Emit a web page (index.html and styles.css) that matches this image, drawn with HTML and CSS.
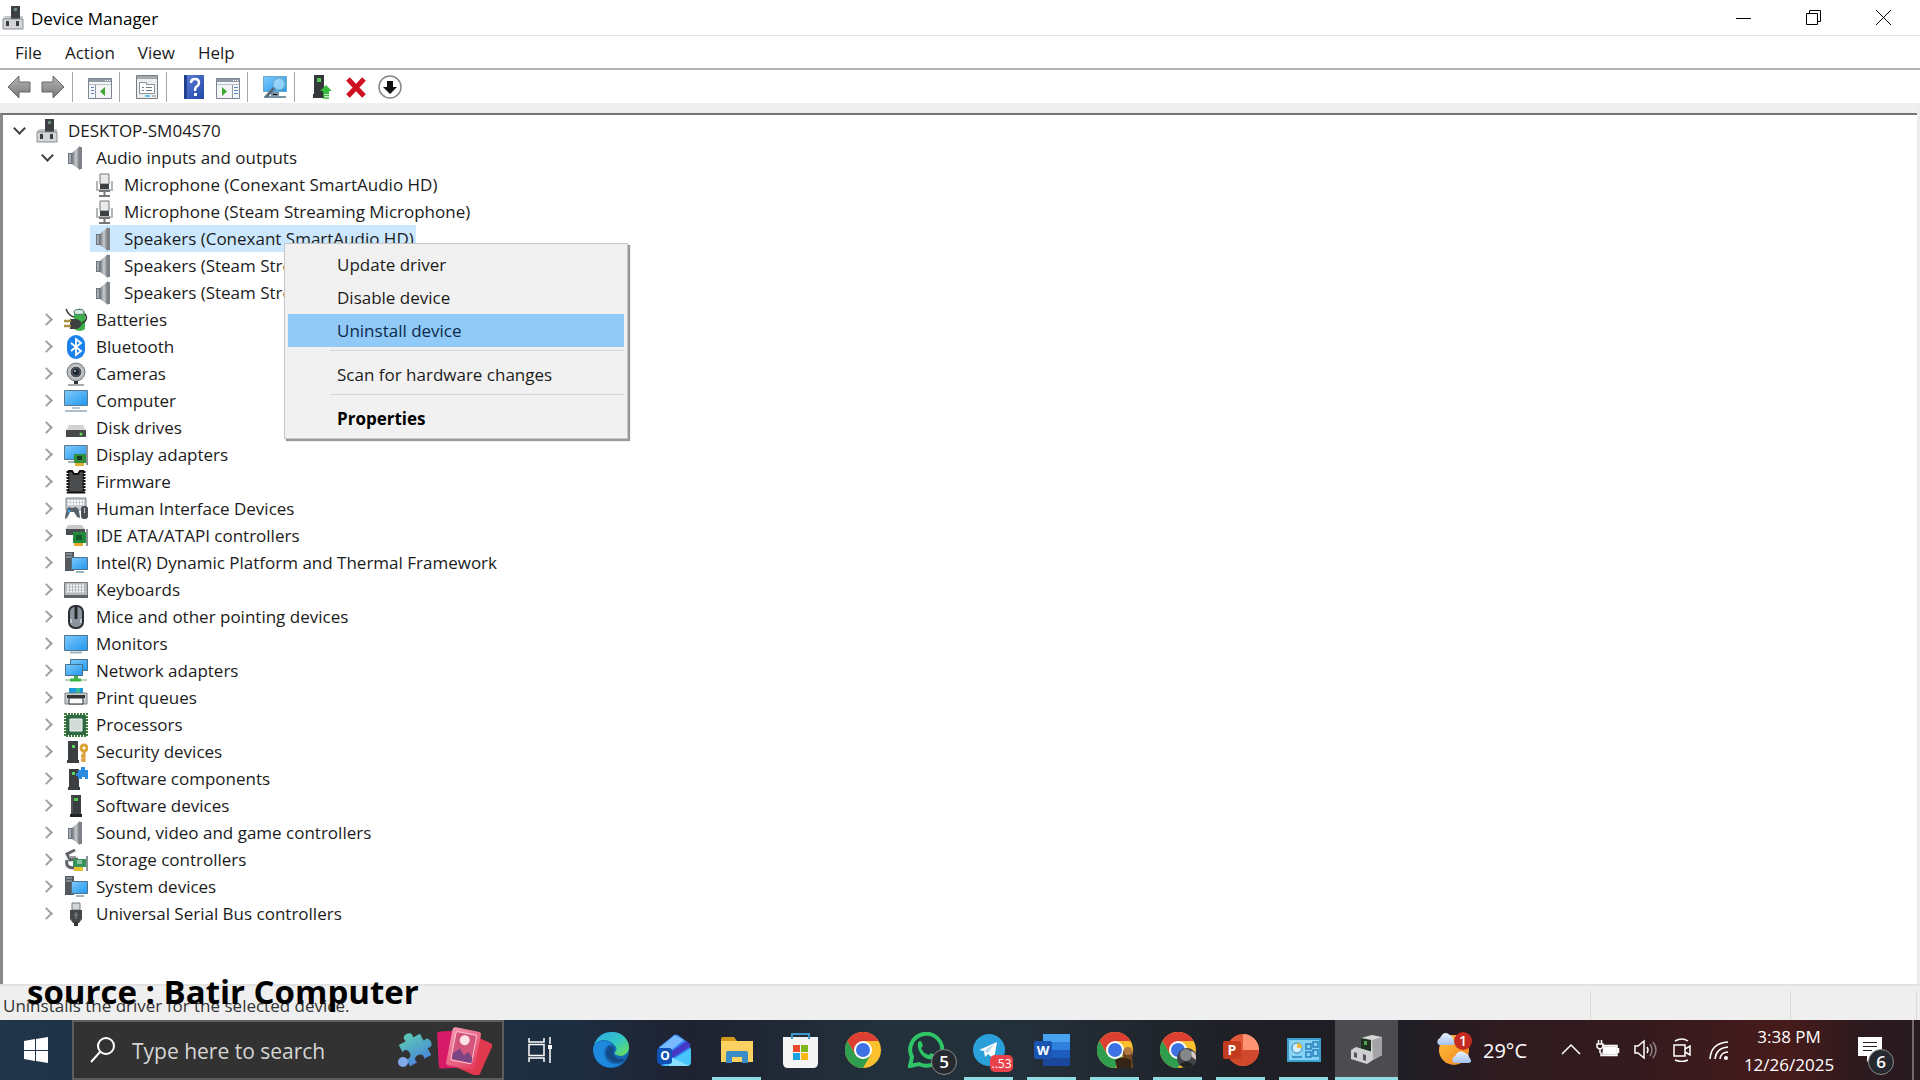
FILE: index.html
```html
<!DOCTYPE html>
<html lang="en">
<head>
<meta charset="utf-8">
<title>Device Manager</title>
<link rel="stylesheet" href="styles.css">
</head>
<body>
<svg class="defs" width="0" height="0" aria-hidden="true">
  <defs>
    <linearGradient id="screen" x1="0" y1="0" x2="1" y2="1"><stop offset="0" stop-color="#7fcbfb"/><stop offset="1" stop-color="#2196ee"/></linearGradient>
    <linearGradient id="metal" x1="0" y1="0" x2="1" y2="0"><stop offset="0" stop-color="#70757a"/><stop offset=".5" stop-color="#c8ccd0"/><stop offset="1" stop-color="#6a6e73"/></linearGradient>
    <linearGradient id="arrow" x1="0" y1="0" x2="0" y2="1"><stop offset="0" stop-color="#b5b5b5"/><stop offset="1" stop-color="#787878"/></linearGradient>
    <linearGradient id="help" x1="0" y1="0" x2="1" y2="1"><stop offset="0" stop-color="#5b7fd6"/><stop offset="1" stop-color="#2347a8"/></linearGradient>
    <linearGradient id="teal" x1="0" y1="0" x2="1" y2="1"><stop offset="0" stop-color="#2aa7e8"/><stop offset=".55" stop-color="#35c9c0"/><stop offset="1" stop-color="#6fe04a"/></linearGradient>
    <linearGradient id="puzzle" x1="0" y1="0" x2="0" y2="1"><stop offset="0" stop-color="#5cc9b4"/><stop offset="1" stop-color="#4a8ad8"/></linearGradient>
    <linearGradient id="photo" x1="0" y1="0" x2="1" y2="1"><stop offset="0" stop-color="#f49ab4"/><stop offset="1" stop-color="#e23a5e"/></linearGradient>
    <linearGradient id="cloud" x1="0" y1="0" x2="0" y2="1"><stop offset="0" stop-color="#e9f2ff"/><stop offset="1" stop-color="#a5c1ee"/></linearGradient>
    <linearGradient id="sun" x1="0" y1="0" x2="1" y2="1"><stop offset="0" stop-color="#ffc23c"/><stop offset="1" stop-color="#f5821f"/></linearGradient>
  </defs>
  <symbol id="i-devmgr" viewBox="0 0 24 24"><rect x="9" y="0" width="9" height="13" fill="#3d4145"/><rect x="12" y="2" width="3" height="3" fill="#6f8f78"/><path d="M3 10h6v3h9v-3h3v13H1V12z" fill="#c3c6ca"/><path d="M1 13h20v10H1z" fill="#d3d5d8" stroke="#8b8f94"/><rect x="4" y="15" width="3" height="5" fill="#3a3d42"/><rect x="14" y="15" width="3" height="5" fill="#3a3d42"/></symbol>
  <symbol id="i-speaker" viewBox="0 0 24 24"><path d="M4 7h5v11H4z" fill="#6f757c"/><path d="M5 8h2v9H5z" fill="#a5abb2"/><path d="M8 7 16 0v24l-8-6z" fill="url(#metal)"/><path d="M15 1h3v22h-3z" fill="#7d8288"/></symbol>
  <symbol id="i-mic" viewBox="0 0 24 24"><path d="M8 1h9v10H8z" fill="#e9eaeb" stroke="#777"/><path d="M8 11h9v5H8z" fill="#3e4144"/><path d="M5 8v9h15V8" fill="none" stroke="#b4b6b8" stroke-width="2"/><path d="M7 18h11M12.500 18v4M7 23h11" fill="none" stroke="#777" stroke-width="2"/></symbol>
  <symbol id="i-battery" viewBox="0 0 24 24"><path d="M10 3q6-5 10 0l1 3v15q-5 4-11 0z" fill="#3cae49"/><ellipse cx="15" cy="4" rx="5" ry="2.500" fill="#d9eeda" stroke="#577"/><path d="M2 1q3 7 8 8M21 6q4 6-3 9" fill="none" stroke="#333" stroke-width="1.500"/><path d="M6 11h5q5 0 7 5-2 5-7 5H6z" fill="#3c403e"/><path d="M0 13h7M0 18h7" stroke="#a89044" stroke-width="2.500"/></symbol>
  <symbol id="i-bluetooth" viewBox="0 0 24 24"><rect x="3" y="0" width="18" height="24" rx="9" fill="#1a82ea"/><path d="m7 8 10 8-5 4V4l5 4-10 8" fill="none" stroke="#fff" stroke-width="1.800"/></symbol>
  <symbol id="i-camera" viewBox="0 0 24 24"><circle cx="12" cy="10" r="9" fill="#b6b9bb" stroke="#74777a"/><circle cx="12" cy="10" r="6" fill="#4a4f55" stroke="#e6e6e6"/><circle cx="12" cy="10" r="3" fill="#1d2730"/><circle cx="11" cy="9" r="1" fill="#9cc0dd"/><path d="M10 19h4v3h-4z" fill="#333"/><path d="M4 23h16" stroke="#a9abad" stroke-width="2"/></symbol>
  <symbol id="i-computer" viewBox="0 0 24 24"><path d="M.5 1.500h23v15H.5z" fill="url(#screen)" stroke="#58788d"/><path d="M8 18h8v2H8z" fill="#b6c6d2"/><path d="M1 21h22v2H1z" fill="#aebdc9"/></symbol>
  <symbol id="i-disk" viewBox="0 0 24 24"><path d="M5 9h14l3 6H2z" fill="#d0d2d4"/><path d="M2 14h20v7H2z" fill="#47494b"/><circle cx="17" cy="18" r="1.500" fill="#62e04c"/></symbol>
  <symbol id="i-display" viewBox="0 0 24 24"><path d="M.5 2.500h22v14H.5z" fill="url(#screen)" stroke="#58788d"/><path d="M4 19h7" stroke="#9eb2c0" stroke-width="2"/><path d="M10 11h12v9H10z" fill="#2f8f3f"/><path d="M13 13h5v4h-5z" fill="#1b3f22"/><path d="M11 20h9v3h-9z" fill="#e0b030"/><path d="M23 2v20" stroke="#8b9297" stroke-width="2"/></symbol>
  <symbol id="i-firmware" viewBox="0 0 24 24"><path d="M4 1h4l2 3h4l2-3h4v22H4z" fill="#4a4c4e"/><path d="M4 1h4l2 3h4l2-3h4" fill="none" stroke="#111" stroke-width="2"/><path d="M4 1v22M20 1v22" stroke="#111" stroke-width="3" stroke-dasharray="2 1"/><path d="M3 22.500h18" stroke="#111" stroke-width="2"/></symbol>
  <symbol id="i-hid" viewBox="0 0 24 24"><path d="M2 1h20v12H2z" fill="#c8cccf" stroke="#82888d"/><path d="M4 4h16M4 7h16" stroke="#fff" stroke-width="2" stroke-dasharray="2 1"/><path d="M1 22q1-13 5-12 1 2 5 0 4-1 5 11l-3-1-3-5H6l-3 6z" fill="#56626c"/><circle cx="5" cy="14" r="1.500" fill="#3ba3ea"/><rect x="17" y="9" width="7" height="13" rx="3" fill="#4b5056"/><path d="M20.500 11v5" stroke="#bcc5cc"/></symbol>
  <symbol id="i-ide" viewBox="0 0 24 24"><path d="M4 1h14l3 5H1z" fill="#c7c9cb"/><path d="M2 5h19v6H2z" fill="#4a4d50"/><path d="M9 8h13v11H9z" fill="#218a3c"/><path d="M12 11h6v5h-6z" fill="#15552a"/><path d="M10 19h9v3h-9z" fill="#e9a928"/><path d="M23 5v17" stroke="#8b9297" stroke-width="2"/></symbol>
  <symbol id="i-system" viewBox="0 0 24 24"><path d="M1 1h9v19H1z" fill="#55595d"/><path d="M2 3h6M2 6h6" stroke="#b4bfc4"/><path d="M7.500 6.500h16v12h-16z" fill="url(#screen)" stroke="#4f7288"/><path d="M12 21h8" stroke="#9ab4c4" stroke-width="2"/></symbol>
  <symbol id="i-keyboard" viewBox="0 0 24 24"><path d="M.5 4.500h23v15H.5z" fill="#b5b9bc" stroke="#777b7e"/><path d="M3 7.500h18M3 10.500h18M3 13.500h18" stroke="#fafafa" stroke-width="2" stroke-dasharray="2 1"/><path d="M0 17h24v3H0z" fill="#606366"/></symbol>
  <symbol id="i-mouse" viewBox="0 0 24 24"><rect x="5" y="1" width="14" height="22" rx="6" fill="#8d939c" stroke="#2c2f33" stroke-width="2"/><path d="M12 2v12" stroke="#24272a" stroke-width="3"/><path d="M7 14v4M17 14v4" stroke="#c0c6cf" stroke-width="2"/></symbol>
  <symbol id="i-monitor" viewBox="0 0 24 24"><path d="M.5 3.500h23v15H.5z" fill="url(#screen)" stroke="#51748a"/><path d="M6 20.500h12" stroke="#9fb5c4" stroke-width="2"/></symbol>
  <symbol id="i-network" viewBox="0 0 24 24"><path d="M6.500.5h17v11h-17z" fill="url(#screen)" stroke="#447189"/><path d="M1.500 5.500h17v11h-17z" fill="url(#screen)" stroke="#447189"/><path d="M10 17h4v3h-4z" fill="#4cae4a"/><path d="M1 21h22" stroke="#b9d2b9" stroke-width="2"/><path d="M6 21h11" stroke="#33b540" stroke-width="3"/></symbol>
  <symbol id="i-printer" viewBox="0 0 24 24"><path d="M5 2h14v7H5z" fill="#1e9ae0"/><path d="M12 2h4v5h-4z" fill="#32bd9c"/><path d="M1 7h22v11H1z" fill="#c7cbce" stroke="#7d8184"/><path d="M3 9h18v3H3z" fill="#34373a"/><path d="M5 12h14v6H5z" fill="#fafafa" stroke="#333"/></symbol>
  <symbol id="i-cpu" viewBox="0 0 24 24"><rect x="2" y="2" width="20" height="20" fill="#2f6a44"/><rect x="1" y="1" width="22" height="22" fill="none" stroke="#3f7d3f" stroke-width="2" stroke-dasharray="2 1"/><path d="M6 6h12v12H6z" fill="#d3dbd9" stroke="#edf2f0"/></symbol>
  <symbol id="i-tower" viewBox="0 0 24 24"><path d="M7 1h10v19H7z" fill="#3b3f41"/><path d="M6 20h12v3H6z" fill="#222426"/><path d="M10 4h4v3h-4z" fill="#52c956"/><path d="M8 2v17" stroke="#666b6e"/></symbol>
  <symbol id="i-security" viewBox="0 0 24 24"><path d="M4 1h10v19H4zM3 20h12v3H3z" fill="#3b3f41"/><path d="M8 5h3v3H8z" fill="#58d65c"/><circle cx="20" cy="8" r="3" fill="none" stroke="#dca335" stroke-width="3"/><path d="M20 11v11M20 16h-3M20 20h-3" stroke="#d9a440" stroke-width="3"/></symbol>
  <symbol id="i-component" viewBox="0 0 24 24"><path d="M5 2h10v19H5zM4 20h12v3H4z" fill="#3b3f41"/><path d="M8 5h3v3H8z" fill="#58d65c"/><path d="M14 3h3V0h4v3h3v9h-3v-2h-3v2h-4V9h-2V6h2z" fill="#2a8be0"/></symbol>
  <symbol id="i-storage" viewBox="0 0 24 24"><path d="m11 2-8 4 3 6 8-1M3 12q-2 8 7 8" fill="none" stroke="#606468" stroke-width="3"/><path d="M5 9h7" stroke="#999" stroke-width="2"/><path d="M9 11h13v8H9z" fill="#35935a"/><path d="M13 12h5v4h-5z" fill="#86c4a0"/><path d="M10 19h9v4h-9z" fill="#e4c12d"/><path d="M23 8v15" stroke="#8b9297" stroke-width="2"/></symbol>
  <symbol id="i-usb" viewBox="0 0 24 24"><path d="M8 1h8v7H8z" fill="#d3d5d7" stroke="#77797b"/><path d="M6 8h12v9l-3 4H9l-3-4z" fill="#444648"/><path d="M12 10v7M10 13h4" stroke="#8b8e90"/><path d="M10 20h4v4h-4z" fill="#333"/></symbol>

  <symbol id="t-arrow" viewBox="0 0 24 24"><path d="M1 12 12 1v6h11v10H12v6z" fill="url(#arrow)" stroke="#666"/></symbol>
  <symbol id="t-panel" viewBox="0 0 24 24"><path d="M.5 3.500h23v20H.5z" fill="#f4f5f6" stroke="#7c858e"/><path d="M1 4h22v3H1z" fill="#8f99a4"/><path d="M17 5.500h5" stroke="#fff" stroke-dasharray="1 1"/><path d="M1 9.500h22" stroke="#b7bec6"/></symbol>
  <symbol id="t-props" viewBox="0 0 24 24"><path d="M1.500.5h21v23h-21z" fill="#eceeef" stroke="#777c80"/><path d="M2 1h20v3H2z" fill="#a4a9ad"/><path d="M4.500 7.500h7v2h8v9h-15z" fill="#fff" stroke="#8a9097"/><path d="M7 12.500h2M11 12.500h6M7 15.500h2M11 15.500h6" stroke="#6f7b86"/><path d="M10 20h5v2h-5z" fill="#5fc3ea"/><path d="M17 20h4v2h-4z" fill="#bbb"/></symbol>
  <symbol id="t-help" viewBox="0 0 24 24"><path d="M2 0h20v24H2z" fill="url(#help)"/><path d="M2 0h3v24H2z" fill="#23408f"/><path d="M9 8q0-4 4-4t4 4q0 2-3 4-1 1-1 4" fill="none" stroke="#fff" stroke-width="2.500"/><path d="M12 18h3v3h-3z" fill="#fff"/></symbol>
  <symbol id="t-scan" viewBox="0 0 24 24"><path d="M.5 1.500h23v15H.5z" fill="url(#screen)" stroke="#6aa7cd"/><path d="M1 22h22M9 18h6v3H9z" stroke="#7b94a5" stroke-width="2"/><circle cx="16" cy="9" r="6" fill="#a5dcfa" fill-opacity=".8" stroke="#6daed5" stroke-width="1.500"/><path d="m11 13-8 9" stroke="#5b6a78" stroke-width="3"/></symbol>
  <symbol id="t-update" viewBox="0 0 24 24"><path d="M4 0h10v19H4zM3 19h11v4H3z" fill="#34383a"/><path d="M7 3h4v4H7z" fill="#58c95c"/><path d="m16 10 6 6h-3v3h-6v-3h-3z" fill="#35bb3c"/><path d="M13 20.500h6M13 23h6" stroke="#35bb3c" stroke-width="1.500"/></symbol>
  <symbol id="t-delete" viewBox="0 0 24 24"><path d="m4 4 16 17M20 4 4 21" stroke="#cf1020" stroke-width="5"/></symbol>
  <symbol id="t-disable" viewBox="0 0 24 24"><circle cx="12" cy="12" r="11" fill="#fff" stroke="#868686" stroke-width="1.500"/><path d="M9 6h6v6h4l-7 7-7-7h4z" fill="#111"/></symbol>

  <symbol id="a-chrome" viewBox="0 0 36 36"><circle cx="18" cy="18" r="18" fill="#fbc02d"/><path d="M18 9h15.600A18 18 0 0 0 2.400 9l7.800 13.500z" fill="#dd4033"/><path d="M2.400 9A18 18 0 0 0 18 36l7.800-13.500L18 27l-7.800-4.500z" fill="#2f9e4f"/><circle cx="18" cy="18" r="9" fill="#fff"/><circle cx="18" cy="18" r="7" fill="#3d72e4"/></symbol>
</svg>

<div class="desktop">
  <main class="window">
    <header class="titlebar">
      <svg class="ico"><use href="#i-devmgr"/></svg>
      <h1 class="title">Device Manager</h1>
      <div class="captions">
        <button class="caption" aria-label="Minimize"><svg class="cap"><path d="M0 8.500h15"/></svg></button>
        <button class="caption" aria-label="Restore"><svg class="cap"><path d="M.5 3.500h11v11H.5zM3.500 3V.5h11v11H12"/></svg></button>
        <button class="caption" aria-label="Close"><svg class="cap"><path d="m0 0 15 15M15 0 0 15"/></svg></button>
      </div>
    </header>
    <nav class="menubar">
      <button>File</button><button>Action</button><button>View</button><button>Help</button>
    </nav>
    <div class="toolbar">
      <div class="tools"><button aria-label="Back"><svg class="ico"><use href="#t-arrow"/></svg></button><button aria-label="Forward"><svg class="ico flip"><use href="#t-arrow"/></svg></button></div>
      <div class="tools"><button aria-label="Show console tree"><svg class="ico" viewBox="0 0 24 24"><use href="#t-panel"/><path d="M7.500 10v13" stroke="#8f99a4"/><path d="M3 12.500h3M3 15.500h3M3 18.500h3" stroke="#5a87c5"/><path d="m17 12v9l-5-4.500z" fill="#3fa535"/></svg></button></div>
      <div class="tools"><button aria-label="Properties"><svg class="ico"><use href="#t-props"/></svg></button></div>
      <div class="tools"><button aria-label="Help"><svg class="ico"><use href="#t-help"/></svg></button><button aria-label="Show action pane"><svg class="ico" viewBox="0 0 24 24"><use href="#t-panel"/><path d="M16.500 10v13" stroke="#8f99a4"/><path d="M18 12.500h4M18 15.500h4M18 18.500h4" stroke="#5a87c5"/><path d="m6 12v9l5-4.500z" fill="#3fa535"/></svg></button></div>
      <div class="tools"><button aria-label="Scan for hardware changes"><svg class="ico"><use href="#t-scan"/></svg></button></div>
      <div class="tools"><button aria-label="Update driver"><svg class="ico"><use href="#t-update"/></svg></button><button aria-label="Uninstall device"><svg class="ico"><use href="#t-delete"/></svg></button><button aria-label="Disable device"><svg class="ico"><use href="#t-disable"/></svg></button></div>
    </div>
    <section class="pane">
      <ul class="tree">
        <li class="row"><button class="tog open" aria-label="Collapse"></button><span class="node"><svg class="ico"><use href="#i-devmgr"/></svg>DESKTOP-SM04S70</span></li>
        <li class="row l1"><button class="tog open" aria-label="Collapse"></button><span class="node"><svg class="ico"><use href="#i-speaker"/></svg>Audio inputs and outputs</span></li>
        <li class="row l2"><span class="node"><svg class="ico"><use href="#i-mic"/></svg>Microphone (Conexant SmartAudio HD)</span></li>
        <li class="row l2"><span class="node"><svg class="ico"><use href="#i-mic"/></svg>Microphone (Steam Streaming Microphone)</span></li>
        <li class="row l2"><span class="node selected"><svg class="ico"><use href="#i-speaker"/></svg>Speakers (Conexant SmartAudio HD)</span>
          <div class="context" role="menu">
            <button role="menuitem">Update driver</button>
            <button role="menuitem">Disable device</button>
            <button role="menuitem" class="hover">Uninstall device</button>
            <hr>
            <button role="menuitem">Scan for hardware changes</button>
            <hr>
            <button role="menuitem" class="default">Properties</button>
          </div>
        </li>
        <li class="row l2"><span class="node"><svg class="ico"><use href="#i-speaker"/></svg>Speakers (Steam Stre</span></li>
        <li class="row l2"><span class="node"><svg class="ico"><use href="#i-speaker"/></svg>Speakers (Steam Stre</span></li>
        <li class="row l1"><button class="tog" aria-label="Expand"></button><span class="node"><svg class="ico"><use href="#i-battery"/></svg>Batteries</span></li>
        <li class="row l1"><button class="tog" aria-label="Expand"></button><span class="node"><svg class="ico"><use href="#i-bluetooth"/></svg>Bluetooth</span></li>
        <li class="row l1"><button class="tog" aria-label="Expand"></button><span class="node"><svg class="ico"><use href="#i-camera"/></svg>Cameras</span></li>
        <li class="row l1"><button class="tog" aria-label="Expand"></button><span class="node"><svg class="ico"><use href="#i-computer"/></svg>Computer</span></li>
        <li class="row l1"><button class="tog" aria-label="Expand"></button><span class="node"><svg class="ico"><use href="#i-disk"/></svg>Disk drives</span></li>
        <li class="row l1"><button class="tog" aria-label="Expand"></button><span class="node"><svg class="ico"><use href="#i-display"/></svg>Display adapters</span></li>
        <li class="row l1"><button class="tog" aria-label="Expand"></button><span class="node"><svg class="ico"><use href="#i-firmware"/></svg>Firmware</span></li>
        <li class="row l1"><button class="tog" aria-label="Expand"></button><span class="node"><svg class="ico"><use href="#i-hid"/></svg>Human Interface Devices</span></li>
        <li class="row l1"><button class="tog" aria-label="Expand"></button><span class="node"><svg class="ico"><use href="#i-ide"/></svg>IDE ATA/ATAPI controllers</span></li>
        <li class="row l1"><button class="tog" aria-label="Expand"></button><span class="node"><svg class="ico"><use href="#i-system"/></svg>Intel(R) Dynamic Platform and Thermal Framework</span></li>
        <li class="row l1"><button class="tog" aria-label="Expand"></button><span class="node"><svg class="ico"><use href="#i-keyboard"/></svg>Keyboards</span></li>
        <li class="row l1"><button class="tog" aria-label="Expand"></button><span class="node"><svg class="ico"><use href="#i-mouse"/></svg>Mice and other pointing devices</span></li>
        <li class="row l1"><button class="tog" aria-label="Expand"></button><span class="node"><svg class="ico"><use href="#i-monitor"/></svg>Monitors</span></li>
        <li class="row l1"><button class="tog" aria-label="Expand"></button><span class="node"><svg class="ico"><use href="#i-network"/></svg>Network adapters</span></li>
        <li class="row l1"><button class="tog" aria-label="Expand"></button><span class="node"><svg class="ico"><use href="#i-printer"/></svg>Print queues</span></li>
        <li class="row l1"><button class="tog" aria-label="Expand"></button><span class="node"><svg class="ico"><use href="#i-cpu"/></svg>Processors</span></li>
        <li class="row l1"><button class="tog" aria-label="Expand"></button><span class="node"><svg class="ico"><use href="#i-security"/></svg>Security devices</span></li>
        <li class="row l1"><button class="tog" aria-label="Expand"></button><span class="node"><svg class="ico"><use href="#i-component"/></svg>Software components</span></li>
        <li class="row l1"><button class="tog" aria-label="Expand"></button><span class="node"><svg class="ico"><use href="#i-tower"/></svg>Software devices</span></li>
        <li class="row l1"><button class="tog" aria-label="Expand"></button><span class="node"><svg class="ico"><use href="#i-speaker"/></svg>Sound, video and game controllers</span></li>
        <li class="row l1"><button class="tog" aria-label="Expand"></button><span class="node"><svg class="ico"><use href="#i-storage"/></svg>Storage controllers</span></li>
        <li class="row l1"><button class="tog" aria-label="Expand"></button><span class="node"><svg class="ico"><use href="#i-system"/></svg>System devices</span></li>
        <li class="row l1"><button class="tog" aria-label="Expand"></button><span class="node"><svg class="ico"><use href="#i-usb"/></svg>Universal Serial Bus controllers</span></li>
      </ul>
    </section>
    <footer class="status">
      <span class="message">Uninstalls the driver for the selected device.</span>
      <span class="cell wide"></span><span class="cell"></span>
      <strong class="credit">source : Batir Computer</strong>
    </footer>
  </main>

  <footer class="taskbar">
    <button class="start" aria-label="Start"><svg width="24" height="26" viewBox="0 0 24 26" fill="#fff"><path d="M0 4l11-2v11H0zM12 2l12-2v13H12zM0 14h11v10L0 22zM12 14h12v12l-12-2z"/></svg></button>
    <label class="search">
      <svg width="26" height="26" viewBox="0 0 26 26" fill="none" stroke="#fff" stroke-width="2"><circle cx="16" cy="9" r="8"/><path d="M10 15 1 25"/></svg>
      <input type="text" placeholder="Type here to search" aria-label="Type here to search">
      <svg width="100" height="50" viewBox="0 0 100 50">
        <path transform="translate(21 25) rotate(-28)" fill="url(#puzzle)" d="M-12-12H-4C-8-20 8-20 4-12H12V-4C20-8 20 8 12 4V12H4C8 4-8 4-4 12H-12V4C-4 8-4-8-12-4z"/>
        <circle cx="9" cy="37" r="5" fill="#84a9ea"/>
        <rect x="44" y="6" width="27" height="37" rx="3" fill="#d81b68" transform="rotate(-3 57 25)"/>
        <rect x="66" y="12" width="27" height="36" rx="3" fill="#e0384e" transform="rotate(24 79 30)"/>
        <g transform="rotate(11 69 24)"><rect x="55" y="4" width="29" height="39" rx="3" fill="url(#photo)"/><rect x="59" y="8" width="21" height="29" rx="2" fill="#d3557e" stroke="#ffc4cf" stroke-width="1"/><circle cx="69" cy="15" r="5" fill="#fbe3e6"/><path d="m60 30 6-6 5 6 4-4 5 5v5H60z" fill="#7c4483"/></g>
      </svg>
    </label>
    <button class="taskview" aria-label="Task View"><svg width="24" height="26" viewBox="0 0 24 26" fill="none" stroke="#fff" stroke-width="1.500"><path d="M1 7.500h15v11H1zM1 1v4h15V1M1 25v-4h15v4M22 0v7M22 12v14"/><path d="M20 8h4v4h-4z" fill="#fff" stroke="none"/></svg></button>
    <div class="apps">
      <button class="app" aria-label="Edge"><svg class="big" viewBox="0 0 36 36"><circle cx="18" cy="18" r="18" fill="#1468b4"/><path d="M1 14C4 4 11 0 19 0c11 0 17 8 17 15 0 6-5 9-9 9-4-1-6-2-5-4 2-2 2-4 0-6C17 6 5 6 1 14z" fill="url(#teal)"/><path d="M0 16c3-8 15-10 20-3-5-2-11 4-8 12 2 6 8 8 13 7l4-1C21 38 3 38 0 18z" fill="#1e88dc"/><path d="M16 14c-5 4-4 13 4 16 6 2 10 0 13-4-6 3-13-1-13-6 2-3 1-6-4-6z" fill="#154b85"/></svg></button>
      <button class="app" aria-label="Outlook"><svg class="big" viewBox="0 0 36 36"><path d="M3 15 18 3q2-1 4 0l12 9v18q0 4-4 4H8q-4 0-4-4z" fill="#2d7df0"/><path d="M3 16 19 3l9 5L8 24z" fill="#78b9ff"/><path d="m12 22 19-13 4 5-19 12z" fill="#4636c4"/><path d="M6 34 35 16v14q0 4-4 4z" fill="#48c5fb"/><path d="m13 24 20 10H13z" fill="#8ae0ff"/><rect x="1" y="16" width="15" height="16" rx="3" fill="#1150b4"/><text x="9" y="28" class="letter" font-size="12">O</text></svg></button>
      <button class="app running" aria-label="File Explorer"><svg class="big" viewBox="0 0 36 36"><path d="M2 7q0-2 2-2h11l3 4H2z" fill="#d49a1c"/><path d="M2 9h32v21H2z" fill="#fbd162"/><path d="M7 31V21q0-2 2-2h18q2 0 2 2v10h-6v-6H13v6z" fill="#3a8cc7"/></svg></button>
      <button class="app" aria-label="Microsoft Store"><svg class="big" viewBox="0 0 36 36"><path d="M1 5h35v26q0 5-5 5H6q-5 0-5-5z" fill="#f4f4f4"/><path d="M10 7V2h17v5" fill="none" stroke="#3f97c9" stroke-width="2"/><path d="M11 13h7v7h-7z" fill="#e8492b"/><path d="M19 13h7v7h-7z" fill="#80b81c"/><path d="M11 21h7v7h-7z" fill="#1ba0e2"/><path d="M19 21h7v7h-7z" fill="#f9b915"/></svg></button>
      <button class="app" aria-label="Chrome"><svg class="big"><use href="#a-chrome"/></svg></button>
      <button class="app" aria-label="WhatsApp"><svg class="big" viewBox="0 0 36 36"><path d="m2 34 2-9a16 16 0 1 1 7 7z" fill="none" stroke="#2fc566" stroke-width="4"/><path d="M10 11c1-3 4-2 4 0l1 3-2 2c2 4 4 6 8 7l2-2 4 2c1 4-4 5-7 4C13 25 9 17 10 11z" fill="#2fc566"/></svg><span class="badge">5</span></button>
      <button class="app running" aria-label="Telegram"><svg class="big" viewBox="0 0 36 36"><circle cx="18" cy="18" r="16" fill="#2b9fd9"/><path d="m8 18 18-8-3 17-6-5-3 3-1-6z" fill="#fff"/><path d="m13 19 10-7-6 9z" fill="#b5d8ea"/></svg><span class="badge red">..53</span></button>
      <button class="app running" aria-label="Word"><svg class="big" viewBox="0 0 36 36"><path d="M9 2h27v8H9z" fill="#48a2f0"/><path d="M9 10h27v8H9z" fill="#2f7fdc"/><path d="M9 18h27v8H9z" fill="#1d5cbc"/><path d="M9 26h27v8H9z" fill="#1a469b"/><rect y="9" width="18" height="18" rx="2" fill="#1c54b3"/><text x="9" y="23" class="letter" font-size="13">W</text></svg></button>
      <button class="app running" aria-label="Chrome, profile one"><svg class="big" viewBox="0 0 36 36"><use href="#a-chrome"/><path d="M20 36q-2-8 6-11-1-10 5-9 6 1 4 9l1 11z" fill="#6d4725"/><circle cx="31" cy="19" r="4" fill="#b27a40"/><path d="M18 28q8-5 16 0v8H20z" fill="#352313"/></svg></button>
      <button class="app running" aria-label="Chrome, profile two"><svg class="big" viewBox="0 0 36 36"><use href="#a-chrome"/><circle cx="27" cy="26" r="10" fill="#414346"/><circle cx="26" cy="23" r="6" fill="#85888b"/><path d="M31 19q6 1 5 9l-4-3z" fill="#d8c7c2"/><path d="M19 33q8-7 14 0l-5 3z" fill="#222"/></svg></button>
      <button class="app running" aria-label="PowerPoint"><svg class="big" viewBox="0 0 36 36"><circle cx="20" cy="18" r="16" fill="#e2583a"/><path d="M20 2a16 16 0 0 1 16 16H20z" fill="#ff9474"/><path d="M4 18h32a16 16 0 0 1-32 0z" fill="#d0492c"/><rect y="9" width="18" height="18" rx="2" fill="#c33a1c"/><text x="9" y="23" class="letter" font-size="14">P</text></svg></button>
      <button class="app running" aria-label="Control Panel"><svg class="big" viewBox="0 0 36 36"><path d="M2 7h32v22H2z" fill="#85d2f4" stroke="#3c9fd2" stroke-width="2"/><circle cx="11" cy="16" r="5" fill="#d4effc" stroke="#2c83b5"/><path d="M11 16v-5a5 5 0 0 1 5 5z" fill="#f1be42"/><path d="M6 25h10M20 12h5v5h-5zM27 10h5v5h-5zM20 20h5v5h-5zM27 18h5v6h-5z" fill="none" stroke="#2881bd" stroke-width="1.500"/></svg></button>
      <button class="app running active" aria-label="Device Manager"><svg class="big" viewBox="0 0 36 36"><path d="m12 6 11-3 10 2v18l-9 5-12-4z" fill="#d6d6d6"/><path d="m23 8 10-3v18l-9 5z" fill="#a4a4a6"/><path d="m12 6 10 2v12l-10-2z" fill="#1f3022"/><path d="M15 9h3v4h-3z" fill="#52a054"/><path d="m2 18 5-3 17 5v8l-6 4-16-5z" fill="#cfcfd1"/><path d="m5 20 3 1v5l-3-1zM14 22l3 1v6l-3-1z" fill="#55565a"/></svg></button>
    </div>
    <div class="tray">
      <button class="weather" aria-label="Weather"><svg width="36" height="36" viewBox="0 0 36 36"><circle cx="18" cy="18" r="15" fill="url(#sun)"/><path d="M3 13a4 4 0 0 1 1-7Q8-2 14 3q3 1 3 4 5 6-2 6z" fill="url(#cloud)"/><path d="M18 31a4 4 0 0 1 1-7q4-7 10-3 4 1 4 4 5 6-2 6z" fill="url(#cloud)"/></svg><span class="badge alert">1</span>29°C</button>
      <button aria-label="Show hidden icons"><svg class="sys" viewBox="0 0 24 24"><path d="m3 16 9-9 9 9"/></svg></button>
      <button aria-label="Battery"><svg class="sys" viewBox="0 0 24 24"><path d="M6 7.500h15v10H5v-3M22.500 10v5M1 6h6v3q-3 4-6 0zM2.500 2v4M5.500 2v4M4 10v5"/><path d="M8 9h12v7H7z" fill="#fff"/></svg></button>
      <button aria-label="Volume"><svg class="sys" viewBox="0 0 24 24"><path d="M2 8h3l6-5v17l-6-5H2zM14 9q2 3 0 6"/><path d="M17 6q4 6 0 12M20 4q6 8 0 16" stroke="#8d8084"/></svg></button>
      <button aria-label="Meet Now"><svg class="sys" viewBox="0 0 24 24"><path d="M4 7h11v11H4zM15 11l5-3v9l-5-3M5 3q7-4 13 0M5 22q7 3 13 0"/></svg></button>
      <button aria-label="Network"><svg class="sys" viewBox="0 0 24 24"><path d="M3 21Q4 5 21 4M8 21Q9 10 21 9M13 21q1-7 8-7"/><circle cx="19" cy="20" r="2" fill="#fff" stroke="none"/></svg></button>
      <button class="clock"><time>3:38 PM</time><time>12/26/2025</time></button>
      <button class="notify" aria-label="Notifications"><svg width="24" height="26" viewBox="0 0 24 26"><path d="M0 0h24v19H15l-6 6v-6H0z" fill="#fff"/><path d="M5 5.500h14M5 9.500h14M5 13.500h9" stroke="#2c1b1e"/></svg><span class="badge">6</span></button>
      <button class="peek" aria-label="Show desktop"></button>
    </div>
  </footer>
</div>
</body>
</html>
```

FILE: styles.css
```css
* { box-sizing: border-box; }
body { margin: 0; font: 17px/27px "Open Sans", "Noto Sans", sans-serif; color: #1b1b1b; }
button { margin: 0; padding: 0; border: 0; background: none; font: inherit; color: inherit; }
.defs { position: absolute; }
.desktop { display: flex; flex-direction: column; height: 100vh; overflow: hidden; }
.window { flex: 1; min-height: 0; display: flex; flex-direction: column; background: #fff; }
.ico { width: 24px; height: 24px; flex: none; display: block; }

.titlebar { display: flex; align-items: center; height: 36px; padding: 0 2px; border-bottom: 1px solid #e3e3e3; }
.title { margin: 2px auto 0 5px; font-size: 17px; font-weight: 400; color: #000; }
.captions { display: flex; }
.caption { width: 70px; height: 35px; display: grid; place-items: center; }
.cap { width: 15px; height: 15px; fill: none; stroke: #000; }

.menubar { display: flex; gap: 23px; height: 34px; padding-left: 15px; align-items: center; border-bottom: 2px solid #b4b4b4; }
.toolbar { display: flex; height: 33px; padding-left: 7px; align-items: center; }
.tools { display: flex; gap: 10px; }
.tools + .tools { margin-left: 7px; padding-left: 15px; border-left: 1px solid #a6a6a6; height: 30px; align-items: center; }
.tools:first-child { align-items: center; }
.flip { transform: scaleX(-1); }

.pane { flex: 1; min-height: 0; border-top: 10px solid #efefef; border-right: 3px solid #ececec; }
.tree { height: 100%; margin: 0; padding: 2px 0 0 1px; list-style: none; border-top: 2px solid #747474; border-left: 3px solid #8a8a8a; }
.row { display: flex; position: relative; height: 27px; }
.l1 { padding-left: 28px; }
.l2 { padding-left: 86px; }
.tog { width: 32px; display: grid; place-items: center; padding-right: 4px; }
.tog::before { content: ""; width: 7px; height: 7px; border: solid #a0a0a0; border-width: 2px 2px 0 0; transform: rotate(45deg); }
.tog.open { padding: 0 2px 4px 0; }
.tog.open::before { border-color: #404040; transform: rotate(135deg); }
.node { display: flex; align-items: center; gap: 8px; white-space: nowrap; }
.l2 .node { padding: 0 2px; }
.selected { background: #cce8ff; }

.context { position: absolute; z-index: 1; left: 280px; top: 18px; width: 344px; padding: 4px 3px 3px; display: flex; flex-direction: column; background: #f1f1f1; border: 1px solid #c6c6c6; box-shadow: 2px 2px 1px #999; }
.context button { height: 33px; padding-left: 49px; text-align: left; }
.context .hover { background: #91c9f7; color: #0b2b4a; }
.context .default { font-weight: 700; color: #000; }
.context hr { width: 294px; height: 1px; margin: 3px 0 7px auto; border: 0; background: #d6d6d6; }

.status { display: flex; position: relative; height: 36px; padding: 5px 3px 0; background: #efefef; border-top: 2px solid #e2e2e2; }
.message { flex: 1; line-height: 30px; color: #333; }
.cell { width: 127px; border: solid #dadada; border-width: 0 1px; }
.wide { width: 200px; border-right: 0; }
.credit { position: absolute; left: 27px; top: -16px; font-size: 33px; line-height: 44px; color: #000; white-space: nowrap; }

.taskbar { display: flex; height: 60px; color: #fff; background: linear-gradient(90deg, #203549 0%, #1d2d40 30%, #1f2231 36%, #22313b 46%, #23303a 53%, #1f1f25 65%, #1f1e25 73%, #2f1b20 78%, #331a1e 85%, #471b1b 93%, #2c1a1e 97%, #271a20 100%); }
.start { width: 72px; display: grid; place-items: center; }
.search { display: flex; align-items: center; width: 432px; padding: 0 8px 0 16px; border: 2px solid #5d5d5d; background: #323232; }
.search input { flex: 1; min-width: 0; margin-left: 16px; padding: 2px 0 0; border: 0; background: none; font: 21px/28px "Open Sans", sans-serif; color: #d6d6d6; }
.search input::placeholder { color: #d6d6d6; opacity: 1; }
.taskview { width: 72px; margin-right: 3px; display: grid; place-items: center; }
.apps { display: flex; }
.app { position: relative; width: 63px; display: grid; place-items: center; }
.big { width: 36px; height: 36px; }
.running::after { content: ""; position: absolute; left: 7px; right: 7px; bottom: 0; height: 3px; background: #8fdde2; }
.active { background: #4b4b50; }
.active::after { left: 0; right: 0; }
.letter { font-family: "Open Sans", sans-serif; font-weight: 700; fill: #fff; text-anchor: middle; }
.badge { position: absolute; display: grid; place-items: center; width: 26px; height: 26px; border: 1px solid #8a8a8a; border-radius: 13px; background: #26292d; font-size: 17px; line-height: 24px; font-weight: 600; right: 0; bottom: 5px; }
.red { width: 23px; height: 17px; border: 0; border-radius: 5px; background: #e9424a; font-size: 12px; line-height: 17px; font-weight: 400; bottom: 8px; right: 7px; }
.tray { display: flex; margin-left: auto; }
.tray button { display: grid; place-items: center; position: relative; width: 37px; }
.tray .weather { display: flex; align-items: center; gap: 11px; width: 120px; padding-left: 4px; font-size: 20px; }
.alert { left: 22px; top: 12px; width: 18px; height: 18px; border: 0; background: #c62b23; font-size: 14px; line-height: 18px; }
.sys { width: 24px; height: 24px; fill: none; stroke: #fff; stroke-width: 1.500; }
.tray .clock { width: 104px; align-content: center; row-gap: 1px; }
.tray .notify { width: 58px; margin-right: 13px; }
.notify .badge { right: 5px; }
.tray .peek { width: 8px; border-left: 2px solid #76696c; }
```
